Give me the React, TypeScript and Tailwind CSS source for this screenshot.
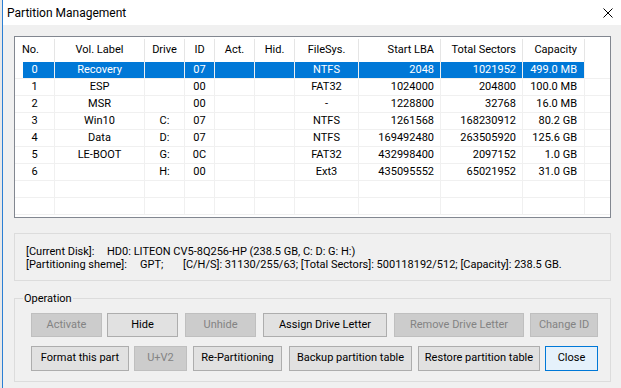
const cols = [
  { w: 'w-[40px]', head: 'No.', hAlign: 'justify-start pl-[7px]', dAlign: 'justify-center' },
  { w: 'w-[90px]', head: 'Vol. Label', hAlign: 'justify-center', dAlign: 'justify-center' },
  { w: 'w-[40px]', head: 'Drive', hAlign: 'justify-center', dAlign: 'justify-center' },
  { w: 'w-[30px]', head: 'ID', hAlign: 'justify-center', dAlign: 'justify-center' },
  { w: 'w-[40px]', head: 'Act.', hAlign: 'justify-center', dAlign: 'justify-center' },
  { w: 'w-[40px]', head: 'Hid.', hAlign: 'justify-center', dAlign: 'justify-center' },
  { w: 'w-[64px]', head: 'FileSys.', hAlign: 'justify-center', dAlign: 'justify-center' },
  { w: 'w-[82px]', head: 'Start LBA', hAlign: 'justify-end pr-[6px]', dAlign: 'justify-end pr-[6px]' },
  { w: 'w-[82px]', head: 'Total Sectors', hAlign: 'justify-end pr-[6px]', dAlign: 'justify-end pr-[6px]' },
  { w: 'w-[62px]', head: 'Capacity', hAlign: 'justify-end pr-[7px]', dAlign: 'justify-end pr-[7px]' },
];

const rows = [
  ['0', 'Recovery', '', '07', '', '', 'NTFS', '2048', '1021952', '499.0 MB'],
  ['1', 'ESP', '', '00', '', '', 'FAT32', '1024000', '204800', '100.0 MB'],
  ['2', 'MSR', '', '00', '', '', '-', '1228800', '32768', '16.0 MB'],
  ['3', 'Win10', 'C:', '07', '', '', 'NTFS', '1261568', '168230912', '80.2 GB'],
  ['4', 'Data', 'D:', '07', '', '', 'NTFS', '169492480', '263505920', '125.6 GB'],
  ['5', 'LE-BOOT', 'G:', '0C', '', '', 'FAT32', '432998400', '2097152', '1.0 GB'],
  ['6', '', 'H:', '00', '', '', 'Ext3', '435095552', '65021952', '31.0 GB'],
  ['', '', '', '', '', '', '', '', '', ''],
  ['', '', '', '', '', '', '', '', '', ''],
];

function Btn({ label, className, disabled, primary }: { label: string; className: string; disabled?: boolean; primary?: boolean }) {
  const look = primary
    ? 'bg-[#e5f1fb] border-[#0078d7] text-black'
    : disabled
      ? 'bg-[#cccccc] border-[#bfbfbf] text-[#838383]'
      : 'bg-[#e1e1e1] border-[#adadad] text-black';
  return (
    <div className={`flex items-center justify-center border whitespace-nowrap ${look} ${className}`}>
      {label}
    </div>
  );
}

export default function App() {
  return (
    <div className="w-[621px] h-[388px] flex overflow-hidden bg-[#f0f0f0] text-[11px] text-black font-['Segoe_UI',Roboto,sans-serif]">
      <div className="w-[2px] bg-[#e8e8e8]" />
      <div className="flex-1 flex flex-col border-l border-[#2b7fd4]">
        {/* title bar */}
        <div className="h-[25px] bg-white flex items-center justify-between pl-[4px] pr-[8px]">
          <span className="text-[12px]">Partition Management</span>
          <svg width="10" height="10" viewBox="0 0 10 10" className="mt-[1px]">
            <path d="M0.5 0.5 L9.5 9.5 M9.5 0.5 L0.5 9.5" stroke="#000" strokeWidth="1" fill="none" />
          </svg>
        </div>

        {/* partition list */}
        <div className="mt-[11px] ml-[11px] mr-[10px] h-[182px] border border-[#828790] bg-white flex flex-col">
          <div className="flex h-[25px] pt-[2px]">
            {cols.map((c, i) => (
              <div key={i} className={`${c.w} flex items-center border-r border-[#e5e5e5] ${c.hAlign}`}>
                {c.head}
              </div>
            ))}
            <div className="flex-1" />
          </div>
          {rows.map((r, ri) => {
            const sel = ri === 0;
            return (
              <div key={ri} className="flex h-[17px] border-b border-[#f0f0f0]">
                {cols.map((c, ci) => (
                  <div key={ci} className={`${c.w} flex border-r border-[#f0f0f0]`}>
                    <div
                      className={`flex-1 flex items-center pt-[1px] ${c.dAlign} ${ci === 0 ? 'ml-[8px] pr-[8px]' : ''} ${sel ? 'bg-[#0078d7] text-white' : ''}`}
                    >
                      {r[ci]}
                    </div>
                  </div>
                ))}
                <div className="flex-1" />
              </div>
            );
          })}
        </div>

        {/* disk info */}
        <div className="mt-[15px] ml-[11px] mr-[10px] h-[48px] border border-[#dcdcdc] pt-[11px] pl-[11px] leading-[13px] whitespace-nowrap">
          <div className="flex">
            <span className="w-[81px]">[Current Disk]:</span>
            <span>HD0: LITEON CV5-8Q256-HP (238.5 GB, C: D: G: H:)</span>
          </div>
          <div className="flex">
            <span className="w-[114px]">[Partitioning sheme]:</span>
            <span className="w-[43px]">GPT;</span>
            <span>[C/H/S]: 31130/255/63; [Total Sectors]: 500118192/512; [Capacity]: 238.5 GB.</span>
          </div>
        </div>

        {/* operation group */}
        <div className="relative mt-[17px] ml-[11px] mr-[10px] h-[84px] border border-[#dcdcdc] pt-[14px] pl-[16px]">
          <span className="absolute -top-[7px] left-[8px] px-[1px] bg-[#f0f0f0] leading-[14px]">Operation</span>
          <div className="flex h-[24px]">
            <Btn label="Activate" disabled className="w-[71px]" />
            <Btn label="Hide" className="w-[71px] ml-[5px]" />
            <Btn label="Unhide" disabled className="w-[71px] ml-[7px]" />
            <Btn label="Assign Drive Letter" className="w-[124px] ml-[7px]" />
            <Btn label="Remove Drive Letter" disabled className="w-[130px] ml-[7px]" />
            <Btn label="Change ID" disabled className="w-[68px] ml-[6px]" />
          </div>
          <div className="flex h-[25px] mt-[9px]">
            <Btn label="Format this part" className="w-[98px]" />
            <Btn label="U+V2" disabled className="w-[53px] ml-[5px]" />
            <Btn label="Re-Partitioning" className="w-[89px] ml-[6px]" />
            <Btn label="Backup partition table" className="w-[123px] ml-[7px]" />
            <Btn label="Restore partition table" className="w-[122px] ml-[6px]" />
            <Btn label="Close" primary className="w-[53px] ml-[5px]" />
          </div>
        </div>
      </div>
    </div>
  );
}
